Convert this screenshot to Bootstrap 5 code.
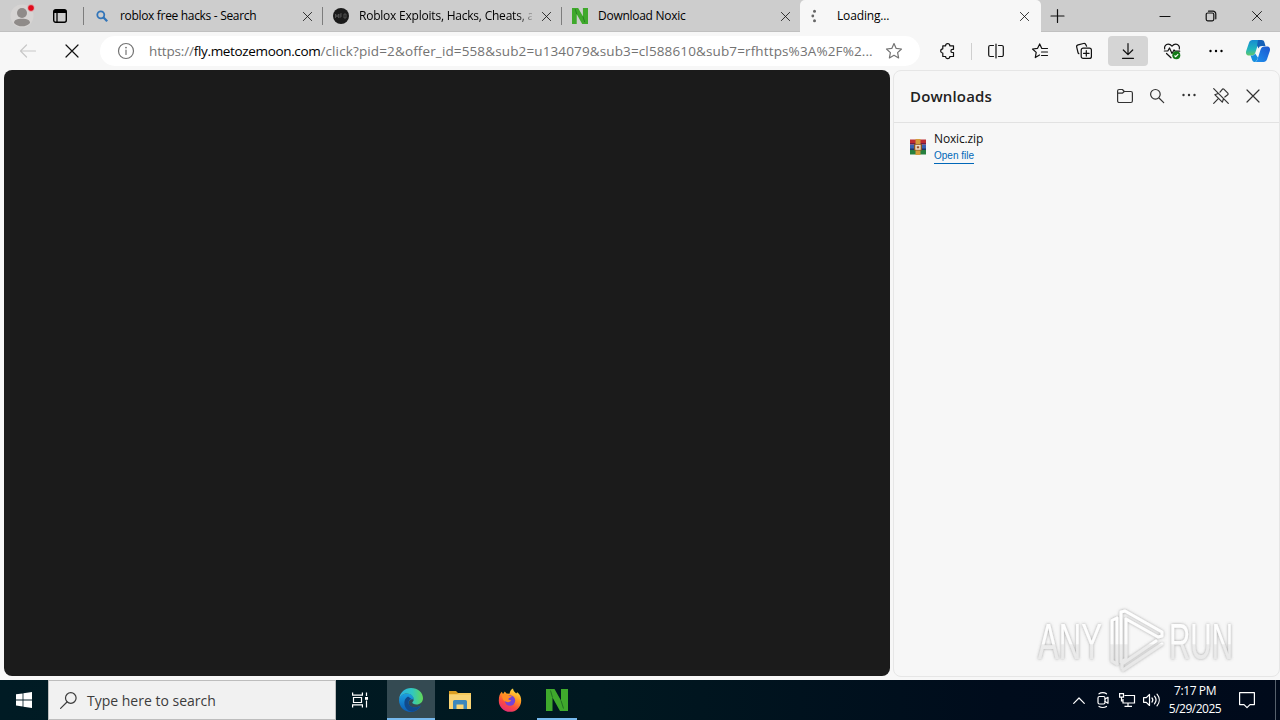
<!DOCTYPE html>
<html lang="en">
<head>
    <meta charset="UTF-8">
    <meta name="viewport" content="width=device-width, initial-scale=1.0">
    <title>Loading...</title>
    <link href="https://cdn.jsdelivr.net/npm/bootstrap@5.3.0/dist/css/bootstrap.min.css" rel="stylesheet">
    <style>
        body {
            width: 1280px;
            height: 720px;
            overflow: hidden;
            background: #f7f7f7;
            font-family: "Open Sans", "Noto Sans", sans-serif;
            color: #111;
        }
        svg {
            display: block;
            flex: none;
            overflow: visible;
        }
        .ln {
            fill: none;
            stroke: currentColor;
            stroke-width: 1.2;
            stroke-linecap: round;
            stroke-linejoin: round;
        }

        /* Tab strip */
        .tab-strip {
            height: 32px;
            background: #cdcdcd;
            border-bottom: 1px solid #c0c0c0;
            font-size: 12px;
        }
        .strip-left {
            width: 84px;
            padding-left: 10px;
            gap: 19px;
        }
        .strip-sep {
            width: 1px;
            height: 18px;
            margin-left: auto;
            background: #7d7d7d;
        }
        .strip-left .strip-sep { margin-left: -3px; }
        .browser-tab {
            width: 239px;
            height: 32px;
            padding-left: 10px;
        }
        .tab-title {
            width: 173px;
            margin-left: 10px;
            white-space: nowrap;
            line-height: 18px;
            color: #000;
        }
        .tab-close { margin-left: 9px; }
        .t-search { letter-spacing: -.32px; }
        .t-exploits {
            letter-spacing: -.22px;
            -webkit-mask-image: linear-gradient(90deg, #000 158px, transparent 178px);
            mask-image: linear-gradient(90deg, #000 158px, transparent 178px);
        }
        .t-noxic { letter-spacing: -.27px; }
        .t-loading { letter-spacing: -.15px; }
        .browser-tab.last { width: 238px; }
        .browser-tab.current {
            width: 241px;
            padding-left: 11px;
            background: #f7f7f7;
            border-radius: 5px 5px 0 0;
        }
        .win-btn { width: 46px; }

        /* Address bar */
        .address-row {
            height: 38px;
            padding-left: 8px;
            gap: 4px;
        }
        .tool-btn {
            width: 40px;
            height: 30px;
            border-radius: 4px;
        }
        .tool-btn.pressed { background: #d5d5d5; }
        .tool-btn.inactive { color: #c8c8c8; }
        .url-pill {
            width: 820px;
            height: 30px;
            margin: 0 4px;
            padding: 0 18px;
            border-radius: 15px;
            background: #fff;
            color: #737373;
        }
        .url-text {
            width: 728px;
            margin-left: 15px;
            font-size: 13.5px;
            white-space: nowrap;
            letter-spacing: .13px;
        }
        .url-text b {
            font-weight: 400;
            color: #000;
            letter-spacing: -.35px;
        }
        .url-text .scheme { letter-spacing: -.15px; }
        .tool-sep {
            width: 1px;
            height: 17px;
            margin: 0 0 0 -1px;
            background: #cfcfcf;
        }
        .copilot { margin-left: 6px; }

        /* Content and downloads pane */
        .content-row {
            height: 610px;
            padding-left: 4px;
            gap: 3px;
        }
        .web-view {
            width: 886px;
            height: 606px;
            border-radius: 8px;
            background: #1b1b1b;
        }
        .dl-pane {
            width: 387px;
            height: 607px;
            border: 1px solid #e6e6e6;
            border-radius: 8px;
            position: relative;
        }
        .dl-head {
            height: 52px;
            padding: 0 10px 0 16px;
            border-bottom: 1px solid #e2e2e2;
            color: #333;
        }
        .dl-title {
            font-size: 15px;
            font-weight: 600;
            letter-spacing: .15px;
            color: #222;
        }
        .dl-btn { width: 32px; padding-bottom: 2px; }
        .dl-item {
            padding: 8px 16px;
            gap: 8px;
        }
        .dl-name {
            font-size: 12px;
            line-height: 16px;
            letter-spacing: -.15px;
        }
        .dl-open {
            padding-top: 1px;
            font-family: "Liberation Sans", Arial, sans-serif;
            font-size: 10px;
            line-height: 15px;
            color: #0067b8;
            border-bottom: 1px solid #0067b8;
            text-decoration: none;
        }
        .watermark {
            position: absolute;
            left: 140px;
            top: 534px;
        }

        /* Taskbar */
        .task-bar {
            height: 40px;
            background: linear-gradient(90deg, #001b24 0, #001820 600px, #000c1c 1000px, #000a1b 100%);
            color: #fff;
        }
        .start-btn { width: 48px; }
        .task-search {
            width: 288px;
            height: 40px;
            padding-left: 11px;
            gap: 10px;
            background: #f1f1f1;
            border: 1px solid #bdbdbd;
            font-size: 14px;
            color: #3c3c3c;
        }
        .task-btn { width: 48px; height: 40px; }
        .task-btn.opened { box-shadow: inset 0 -2px #76b9ed; }
        .task-btn.focused { margin: 0 1px 0 3px; background: #344a52; }
        .task-btn.running { width: 40px; margin-left: 5px; }
        .tray-btn { width: 24px; }
        .clock {
            width: 64px;
            font-size: 12px;
            line-height: 18px;
            letter-spacing: -.4px;
            text-align: center;
        }
        .clock-date { letter-spacing: -.5px; }
        .notify-btn { width: 40px; }
        .peek-btn {
            width: 5px;
            height: 40px;
            border-left: 1px solid #56606c;
        }
    </style>
</head>
<body>
    <!-- Shared glyphs -->
    <svg width="0" height="0" class="position-absolute">
        <symbol id="cross" viewBox="0 0 16 16"><path class="ln" d="M2 2l12 12M14 2L2 14"/></symbol>
        <symbol id="noxic" viewBox="0 0 22 22">
            <path fill="#3fa92c" d="M0 0h8.500l6.500 11.500V0h7v22h-8L6.500 8.500V22H0z"/>
            <path fill="none" stroke="#1d6b20" stroke-width=".9" d="M4.500 1.500l2 7M15 11.500l2.500 8"/>
        </symbol>
    </svg>

    <header class="tab-strip d-flex">
        <div class="strip-left d-flex align-items-center justify-content-between">
            <svg width="24" height="24" viewBox="0 0 24 24">
                <circle cx="12" cy="12" r="11.5" fill="#d6d4d3"/>
                <circle cx="12" cy="9" r="5" fill="#8f8b89"/>
                <path fill="#8f8b89" d="M4 19c0-3 3-4.200 8-4.200s8 1.200 8 4.200c-2 2.500-5 3.300-8 3.300S6 21.500 4 19z"/>
                <circle cx="21" cy="4" r="3.400" fill="#e00b1c" stroke="#ddd" stroke-width=".7"/>
            </svg>
            <svg width="14" height="14" viewBox="0 0 14 14">
                <rect x=".7" y=".7" width="12.600" height="12.600" rx="2" fill="none" stroke="#000" stroke-width="1.400"/>
                <path d="M1 1h12v3H1z"/><path d="M4 4v9" stroke="#000" stroke-width="1.300"/>
            </svg>
            <i class="strip-sep"></i>
        </div>
        <div class="browser-tab d-flex align-items-center">
            <svg width="16" height="16" viewBox="0 0 16 16" fill="none" stroke="#3275b9" stroke-width="1.800"><circle cx="6.800" cy="6.800" r="3.500"/><path d="M9.300 9.300l3.900 3.900" stroke-width="2.300"/></svg>
            <span class="tab-title t-search">roblox free hacks - Search</span>
            <svg class="tab-close" width="11" height="11"><use href="#cross"/></svg>
            <i class="strip-sep"></i>
        </div>
        <div class="browser-tab d-flex align-items-center">
            <svg width="16" height="16" viewBox="0 0 16 16"><circle cx="8" cy="8" r="8" fill="#1b1b1b"/><path fill="none" stroke="#5a5a5a" stroke-width=".8" d="M2.500 10V6l1.500 3 1.500-3v4M7 10V6h2M7 8h2M11 6v4h2V6z"/></svg>
            <span class="tab-title t-exploits">Roblox Exploits, Hacks, Cheats, a</span>
            <svg class="tab-close" width="11" height="11"><use href="#cross"/></svg>
            <i class="strip-sep"></i>
        </div>
        <div class="browser-tab last d-flex align-items-center">
            <svg width="16" height="16"><use href="#noxic"/></svg>
            <span class="tab-title t-noxic">Download Noxic</span>
            <svg class="tab-close" width="11" height="11"><use href="#cross"/></svg>
        </div>
        <div class="browser-tab current d-flex align-items-center">
            <svg width="16" height="16" viewBox="0 0 16 16" fill="#666"><circle cx="3.500" cy="3.200" r="1.500"/><circle cx="1.800" cy="8" r="1.400"/><circle cx="3.500" cy="12.800" r="1.500"/></svg>
            <span class="tab-title t-loading">Loading...</span>
            <svg class="tab-close" width="11" height="11"><use href="#cross"/></svg>
        </div>
        <div class="d-flex align-items-center flex-grow-1 ps-2">
            <svg class="ms-1 me-auto" width="14" height="14" viewBox="0 0 14 14"><path class="ln" d="M4.500 .5v13M-2 7h13"/></svg>
            <div class="win-btn d-flex justify-content-center"><svg width="10" height="10" viewBox="0 0 10 10"><path class="ln" d="M0 5.500h10"/></svg></div>
            <div class="win-btn d-flex justify-content-center"><svg width="10" height="10" viewBox="0 0 10 10"><g class="ln"><rect x=".2" y="2" width="7.600" height="7.800" rx="1.500"/><path d="M2.500.2H7A2.800 2.800 0 0 1 9.800 3v4.800"/></g></svg></div>
            <div class="win-btn d-flex justify-content-center"><svg width="12" height="12"><use href="#cross"/></svg></div>
        </div>
    </header>

    <div class="address-row d-flex align-items-center">
        <div class="tool-btn inactive d-flex align-items-center justify-content-center"><svg width="16" height="14" viewBox="0 0 16 14"><path class="ln" d="M15.500 7H.5M6.500 1l-6 6 6 6"/></svg></div>
        <div class="tool-btn d-flex align-items-center justify-content-center"><svg width="16" height="16"><use href="#cross"/></svg></div>
        <div class="url-pill d-flex align-items-center">
            <svg width="16" height="16" viewBox="0 0 16 16"><g class="ln"><circle cx="8" cy="8" r="7.500"/><path d="M8 7v4.500"/></g><circle cx="8" cy="4.600" r=".9" fill="currentColor"/></svg>
            <span class="url-text"><span class="scheme">https://</span><b>fly.metozemoon.com</b>/click?pid=2&amp;offer_id=558&amp;sub2=u134079&amp;sub3=cl588610&amp;sub7=rfhttps%3A%2F%2...</span>
            <svg class="ms-auto" width="16" height="16" viewBox="0 0 16 16"><path class="ln" d="M8 .6l2.200 4.800 5.300.6-3.900 3.600 1 5.300L8 12.300l-4.600 2.600 1-5.300L.5 6l5.300-.6z"/></svg>
        </div>
        <div class="tool-btn d-flex align-items-center justify-content-center"><svg width="16" height="16" viewBox="0 0 16 16"><path class="ln" d="M2.800 2.800h2.800a2.100 2.100 0 0 1 4.200 0H13.500v3.500h-1a1.600 1.600 0 0 0 0 3.200h1v4H9.800a2.100 2.100 0 0 1-4.200 0H2.800V10a2.100 2.100 0 0 1 0-4.200z"/></svg></div>
        <div class="tool-sep"></div>
        <div class="tool-btn d-flex align-items-center justify-content-center"><svg width="16" height="16" viewBox="0 0 16 16"><path class="ln" d="M5.500 2.500H2.200a1.500 1.500 0 0 0-1.500 1.500v8a1.500 1.500 0 0 0 1.500 1.500h3.300M10.500 2.500h3.300a1.500 1.500 0 0 1 1.500 1.500v8a1.500 1.500 0 0 1-1.500 1.500h-3.300M8 1v14"/></svg></div>
        <div class="tool-btn d-flex align-items-center justify-content-center"><svg width="16" height="16" viewBox="0 0 16 16"><path class="ln" d="M15.500 5.500H9.800L7.700.9 5.600 5.300.5 6l3.700 3.400-.9 5.200L7.500 12M9.500 9h6M9.500 12.500h6"/></svg></div>
        <div class="tool-btn d-flex align-items-center justify-content-center"><svg width="16" height="16" viewBox="0 0 16 16"><g class="ln"><rect x="5.200" y="5.200" width="10.200" height="10.200" rx="2"/><path d="M10.300 7.500v5.600M7.500 10.300h5.600M2.900 10.700A2 2 0 0 1 2 9.500L.7 4.200A2 2 0 0 1 2.100 1.800L7.500.5A2 2 0 0 1 9.900 1.900l.7 1.300"/></g></svg></div>
        <div class="tool-btn pressed d-flex align-items-center justify-content-center"><svg width="16" height="16" viewBox="0 0 16 16"><path class="ln" d="M8 .5v11M3.300 7L8 11.700 12.700 7M2.500 15.300h11"/></svg></div>
        <div class="tool-btn d-flex align-items-center justify-content-center"><svg width="16" height="16" viewBox="0 0 16 16"><path class="ln" d="M.7 6C0 3.500 1.800 1.200 4.200 1.200c1.600 0 2.800.8 3.800 2 1-1.200 2.200-2 3.800-2C14.200 1.200 16 3.500 15.300 6M.3 8h3.500l1.700-3 2.500 5.500L10 7l1 1.200h4.700M2.500 10.500L7 14.800"/><circle cx="12.300" cy="12.300" r="4" fill="#127a17"/><path fill="none" stroke="#fff" stroke-width="1.100" d="M10.500 12.500l1.200 1.200 2.500-2.500"/></svg></div>
        <div class="tool-btn d-flex align-items-center justify-content-center"><svg width="16" height="16" viewBox="0 0 16 16"><circle cx="2.500" cy="8" r="1.200"/><circle cx="8" cy="8" r="1.200"/><circle cx="13.500" cy="8" r="1.200"/></svg></div>
        <svg width="24" height="22" viewBox="0 0 24 22" class="copilot">
            <defs>
                <linearGradient id="cpA" x1="0" y1="0" x2="0" y2="1"><stop offset="0" stop-color="#168bd2"/><stop offset=".6" stop-color="#20b5bd"/><stop offset="1" stop-color="#61c76a"/></linearGradient>
                <linearGradient id="cpB" x1="1" y1="0" x2="0" y2="1"><stop offset="0" stop-color="#1c55cf"/><stop offset="1" stop-color="#1e95ee"/></linearGradient>
            </defs>
            <path fill="url(#cpA)" d="M6.500 0H16c-2 0-3 1-3.600 3l-3 9.500c-.7 2-1.800 3-4 3H3C.6 15.500-.6 13.500.2 11L3 2.800C3.700 1 4.700 0 6.500 0z"/>
            <path fill="#1460b8" d="M12 0h3.500c1.700 0 2.400.8 2.900 2.300L19.500 6H16c-2 0-3 .8-3.500 2.500L11 5.500z"/>
            <path fill="url(#cpB)" d="M17.500 22H8c2 0 3-1 3.600-3l3-9.500c.7-2 1.800-3 4-3H21c2.400 0 3.600 2 2.800 4.500L21 19.200c-.7 1.800-1.700 2.800-3.500 2.800z"/>
            <path fill="#168fdd" d="M4.500 15.500c2.500 0 3.800-.3 4.700-2l2.800 4.300C11.200 20.500 10 22 8.500 22 6 22 6 19 4.500 15.500z"/>
        </svg>
    </div>

    <main class="content-row d-flex">
        <div class="web-view"></div>
        <aside class="dl-pane">
            <div class="dl-head d-flex align-items-center">
                <span class="dl-title me-auto">Downloads</span>
                <div class="dl-btn d-flex justify-content-center"><svg width="16" height="14" viewBox="0 0 16 14"><path class="ln" d="M.6 3.800V2A1.500 1.500 0 0 1 2.100.5h3.300L7.300 2.500h6.600A1.500 1.500 0 0 1 15.400 4v8a1.500 1.500 0 0 1-1.500 1.500H2.100A1.500 1.500 0 0 1 .6 12V4.200h4.700l2-1.700"/></svg></div>
                <div class="dl-btn d-flex justify-content-center"><svg width="14" height="14" viewBox="0 0 14 14"><path class="ln" d="M9 9l4.700 4.700M10.200 5.300a4.800 4.800 0 1 1-9.600 0 4.800 4.800 0 0 1 9.600 0z"/></svg></div>
                <div class="dl-btn d-flex justify-content-center"><svg width="16" height="16" viewBox="0 0 16 16"><g fill="#333"><circle cx="2.500" cy="7" r="1.200"/><circle cx="8" cy="7" r="1.200"/><circle cx="13.500" cy="7" r="1.200"/></g></svg></div>
                <div class="dl-btn d-flex justify-content-center"><svg width="16" height="16" viewBox="0 0 16 16"><path class="ln" d="M.7.700l14.600 14.600M7 4.200L9.300 1.300a1 1 0 0 1 1.500-.1l4 4a1 1 0 0 1-.1 1.500L11.800 9M5.200 5.500L1.800 6.700l7.500 7.500 1.200-3.400M5.300 10.700L.7 15.300"/></svg></div>
                <div class="dl-btn d-flex justify-content-center"><svg width="16" height="16"><use href="#cross"/></svg></div>
            </div>
            <div class="dl-item d-flex">
                <svg class="mt-2" width="16" height="16" viewBox="0 0 16 16">
                    <path fill="#bd2b32" d="M0 .5h16V5H0z"/><path fill="#3961b1" d="M0 5.500h16v5H0z"/><path fill="#27803f" d="M0 11h16v4.500H0z"/>
                    <path fill="#731b45" d="M0 4h16v1.500H0z"/><path fill="#223565" d="M0 9.500h16V11H0z"/>
                    <path fill="#d39c3a" d="M5.500 0h5v16h-5z"/><path fill="#8b5520" d="M4 5h8v6.500H4z"/><path fill="#f0dfc9" d="M5.300 5.800h5.400v5H5.300z"/><path fill="#98502a" d="M6.800 7.300h2.400v2H6.800z"/>
                </svg>
                <div class="d-flex flex-column align-items-start">
                    <span class="dl-name">Noxic.zip</span>
                    <a class="dl-open" href="#">Open file</a>
                </div>
            </div>
            <svg class="watermark" width="206" height="72" viewBox="0 0 206 72" font-family="Liberation Sans Narrow, Liberation Sans, sans-serif" font-size="50">
                <defs>
                    <linearGradient id="wm" gradientUnits="userSpaceOnUse" x1="0" y1="4" x2="0" y2="68"><stop offset="0" stop-color="#fff"/><stop offset=".54" stop-color="#fcfcfc"/><stop offset=".56" stop-color="#ececec"/><stop offset="1" stop-color="#e6e6e6"/></linearGradient>
                    <filter id="soft" x="-10%" y="-10%" width="120%" height="120%"><feDropShadow dx="0" dy="0" stdDeviation="1.500" flood-color="#666" flood-opacity=".6"/></filter>
                </defs>
                <g filter="url(#soft)" fill="url(#wm)">
                    <text x="4" y="54" textLength="64" lengthAdjust="spacingAndGlyphs">ANY</text>
                    <text x="135" y="54" textLength="64" lengthAdjust="spacingAndGlyphs">RUN</text>
                    <g fill="none" stroke="url(#wm)" stroke-width="3" stroke-linecap="round" stroke-linejoin="round">
                        <path d="M83 13l-5 2.500V56l5 3V13"/>
                        <path d="M87 57V7l4-1 37 21v4l-4 1-32-18v40z"/>
                        <path d="M88 59l34-23M89 65l39-26M88 59v4"/>
                    </g>
                </g>
            </svg>
        </aside>
    </main>

    <footer class="task-bar d-flex align-items-center">
        <div class="start-btn d-flex justify-content-center"><svg width="16" height="16" viewBox="0 0 16 16" fill="#fff"><path d="M0 2.300l6.600-.9v6.100H0zM7.400 1.300L16 0v7.500H7.400zM0 8.400h6.600v6.100L0 13.600zM7.400 8.400H16V16l-8.600-1.300z"/></svg></div>
        <div class="task-search d-flex align-items-center">
            <svg width="17" height="17" viewBox="0 0 17 17"><g class="ln"><circle cx="10.800" cy="6" r="5.300"/><path d="M7 10L.6 16.400"/></g></svg>
            <span>Type here to search</span>
        </div>
        <div class="task-btn d-flex align-items-center justify-content-center"><svg width="16" height="16" viewBox="0 0 16 16" fill="none" stroke="#fff" stroke-width="1.200"><path d="M.6.500v2.600h9.800V.5M.6 15.500v-2.600h9.800v2.600M1.500 5.500h8v5h-8zM14.500.5v3.500M14.500 8.500v7"/><path fill="#fff" stroke="none" d="M13 5h3v2.800h-3z"/></svg></div>
        <div class="task-btn focused opened d-flex align-items-center justify-content-center">
            <svg width="24" height="24" viewBox="0 0 24 24">
                <defs>
                    <linearGradient id="edA" x1="0" y1="0" x2="1" y2="0"><stop offset="0" stop-color="#2cb2e6"/><stop offset=".55" stop-color="#31c7c0"/><stop offset="1" stop-color="#62d856"/></linearGradient>
                    <linearGradient id="edB" x1="0" y1="0" x2="0" y2="1"><stop offset="0" stop-color="#1ba0e0"/><stop offset="1" stop-color="#0b5cb5"/></linearGradient>
                </defs>
                <path fill="url(#edB)" d="M0 12C.3 8 4 5.500 8 5.500c4.500 0 7 3 7 6.500-1.500-1.500-5.500-.5-5.500 3 0 3.300 4 5 8 4.200 1.700-.3 3-.9 4.200-1.700C20 21.500 16 24 12 24 5 24 0 18.500 0 12z"/>
                <path fill="#114a8b" d="M9 8.500c-3 1.500-4 4.500-3.500 8 .6 4 4 7 8 7.200 3.500-.4 6.500-2.500 8.200-6.200-5 3.500-12.500 1.500-12.200-3 .1-2 1.500-3.300 3-3.500z"/>
                <path fill="url(#edA)" d="M.1 11C.8 4.500 6 0 12 0c7 0 12 4.800 12 10.200 0 3.800-3 6.300-6.500 6.300-2.700 0-4.200-1-4.200-1.900 0-.6 1.500-1.200 1.500-3.300 0-3-3-5.800-7-5.800-4 0-6.700 2.500-7.700 5.500z"/>
            </svg>
        </div>
        <div class="task-btn d-flex align-items-center justify-content-center"><svg width="22" height="20" viewBox="0 0 22 20"><path fill="#dc9f22" d="M0 1h7l2 2h11v4H0z"/><path fill="#f9d475" d="M0 4h22v15H0z"/><path fill="#f5c95c" d="M0 4h8l2-1h12v2H0z"/><path fill="#3b87bd" d="M4 19v-7.500a1.500 1.500 0 0 1 1.500-1.500h11a1.500 1.500 0 0 1 1.500 1.500V19h-3.500v-4.500H7.500V19z"/></svg></div>
        <div class="task-btn d-flex align-items-center justify-content-center ms-0 me-0 ps-1">
            <svg width="24" height="24" viewBox="0 0 24 24">
                <defs><linearGradient id="ff" x1=".8" y1="0" x2=".3" y2="1"><stop offset="0" stop-color="#ffe84a"/><stop offset=".4" stop-color="#ff9820"/><stop offset=".7" stop-color="#fb4b42"/><stop offset="1" stop-color="#e52b78"/></linearGradient></defs>
                <path fill="url(#ff)" d="M.8 12.500C.8 8 2 5.500 3.800 3.800L5 6l1.800-2.500L8.500 5.500l3 .3C12 3 13 1.500 15 .5c.3 2.500 2 3.500 3.200 5l1-1.200c3 2 4 5 4 8.500A11.200 11.200 0 0 1 .8 12.500z"/>
                <circle cx="12" cy="12.500" r="5.200" fill="#7543d6"/>
                <path fill="#ff8d24" d="M4 6.500c2-1 5-.5 6.800 1.200l3 .6c-.5 1.300-2.600 1.500-3.300 2.300-.5 1.200 1 2 2.800 1.500-.7 2-3.500 2.700-5.600 1.300C5 13 4 10 4 6.500z"/>
            </svg>
        </div>
        <div class="task-btn running opened d-flex align-items-center justify-content-center"><svg width="22" height="22"><use href="#noxic"/></svg></div>

        <div class="d-flex align-items-center ms-auto">
            <div class="tray-btn d-flex justify-content-center"><svg width="12" height="7" viewBox="0 0 12 7"><path class="ln" d="M.7 6.300L6 1l5.300 5.300"/></svg></div>
            <div class="tray-btn d-flex justify-content-center"><svg width="12" height="16" viewBox="0 0 12 16"><g class="ln"><rect x="1" y="4.500" width="7" height="7.500" rx="1.500"/><path d="M8 7l3-1.700v6L8 9.500M2 1.800C4 .2 7.500.2 9.500 1.800M2 14.500c2 1.300 5.500 1.300 7.500 0"/></g></svg></div>
            <div class="tray-btn d-flex justify-content-center"><svg width="16" height="14" viewBox="0 0 16 14" fill="none" stroke="#fff" stroke-width="1.200"><path d="M5.500 2.500h10v7.500H4V6M9 10v3M5.500 13.300h7.500M.6.600h3.900v3.600H.6zM2.500 4.200V8H4"/></svg></div>
            <div class="tray-btn d-flex justify-content-center"><svg width="17" height="14" viewBox="0 0 17 14"><path class="ln" d="M.6 4.700h2.700L6.500 1.500v11L3.300 9.300H.6zM9 5c1 1.200 1 2.800 0 4M11.500 3.200c1.900 2.300 1.900 5.300 0 7.600M14 1.200c3 3.500 3 8.100 0 11.600"/></svg></div>
            <div class="clock"><div>7:17 PM</div><div class="clock-date">5/29/2025</div></div>
            <div class="notify-btn d-flex justify-content-center"><svg width="16" height="16" viewBox="0 0 16 16"><path class="ln" d="M.6.600h14.800v12H11l-3 3-3-3H.6z"/></svg></div>
            <div class="peek-btn ms-2"></div>
        </div>
    </footer>

    <script src="https://cdn.jsdelivr.net/npm/bootstrap@5.3.0/dist/js/bootstrap.bundle.min.js"></script>
</body>
</html>
